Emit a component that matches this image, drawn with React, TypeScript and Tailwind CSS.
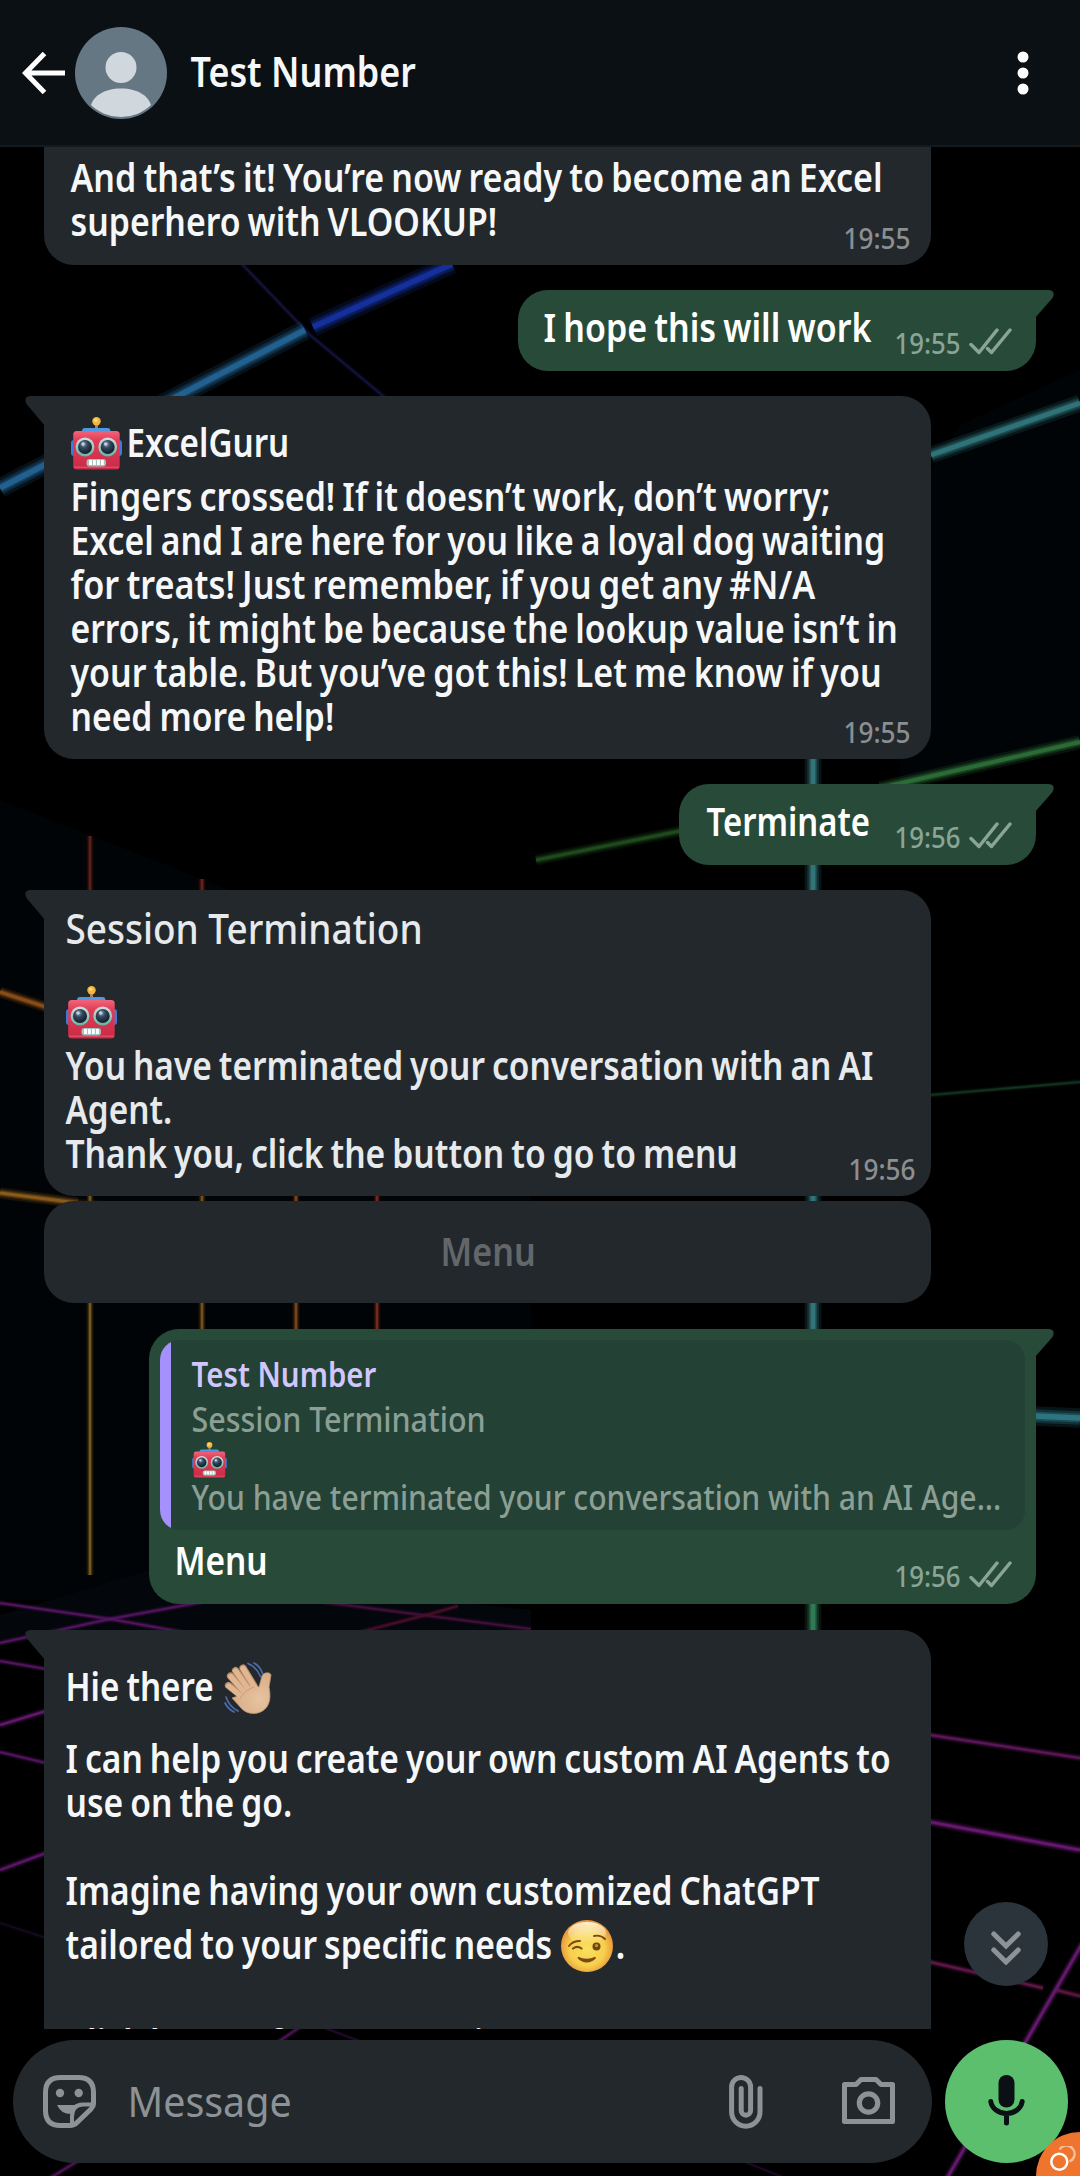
import { useLayoutEffect, useRef, type ReactNode } from "react";

/* A single text line condensed horizontally so that it fills its box. */
function Line({ className, children }: { className: string; children: ReactNode }) {
  const box = useRef<HTMLDivElement>(null);
  const text = useRef<HTMLSpanElement>(null);
  useLayoutEffect(() => {
    const fit = () => {
      if (!box.current || !text.current) return;
      const scale = (box.current.clientWidth - 3) / text.current.offsetWidth;
      text.current.style.transform = `translateX(1.5px) scaleX(${scale})`;
    };
    fit();
    document.fonts?.ready.then(fit);
  }, []);
  return (
    <div ref={box} className={`shrink-0 whitespace-nowrap ${className}`}>
      <span ref={text} className="inline-block origin-left">
        {children}
      </span>
    </div>
  );
}

function Robot({ className }: { className: string }) {
  return (
    <svg viewBox="0 0 51 53" className={`shrink-0 ${className}`} role="img" aria-label="robot">
      <defs>
        <linearGradient id="head" x1="0" y1="0" x2="0" y2="1">
          <stop offset="0" stopColor="#f0657a" />
          <stop offset=".25" stopColor="#e03e57" />
          <stop offset="1" stopColor="#c92a47" />
        </linearGradient>
        <radialGradient id="eye" cx=".4" cy=".3" r=".7">
          <stop offset="0" stopColor="#8fa3b8" />
          <stop offset=".4" stopColor="#33475d" />
          <stop offset="1" stopColor="#131c28" />
        </radialGradient>
        <linearGradient id="ring" x1="0" y1="0" x2="0" y2="1">
          <stop offset="0" stopColor="#d9dcde" />
          <stop offset="1" stopColor="#63b5a4" />
        </linearGradient>
      </defs>
      <rect x="24" y="6" width="3" height="6" fill="#a77c70" />
      <circle cx="25.5" cy="4.3" r="4.2" fill="#f3b63c" />
      <circle cx="24.8" cy="3.2" r="1.8" fill="#fbdc74" />
      <path d="M11 14.5c0-2.500 1-3.500 3-3.500h22.500c2 0 3 1 3 3.500z" fill="#4c9be0" />
      <rect x="0" y="23" width="6" height="16" rx="3" fill="#4079d8" />
      <rect x="45" y="23" width="6" height="16" rx="3" fill="#4079d8" />
      <rect x="2.200" y="14" width="46.500" height="38.500" rx="3.500" fill="url(#head)" />
      <rect x="3" y="49.500" width="45" height="1.500" fill="#e04b63" />
      <circle cx="14" cy="30" r="9.400" fill="url(#ring)" />
      <circle cx="36.700" cy="30" r="9.400" fill="url(#ring)" />
      <circle cx="14" cy="30" r="7" fill="url(#eye)" />
      <circle cx="36.700" cy="30" r="7" fill="url(#eye)" />
      <circle cx="12" cy="27" r="1.700" fill="#c4d2df" />
      <circle cx="34.700" cy="27" r="1.700" fill="#c4d2df" />
      <rect x="15.500" y="42" width="19.500" height="7.500" rx="3" fill="#a3c4bd" />
      <path d="M18 43h3v5h-3zM22 43h2.800v5H22zM26 43h2.800v5H26zM30 43h2.800v5H30z" fill="#fff" />
    </svg>
  );
}

function Hand() {
  return (
    <svg viewBox="0 0 48 52" className="h-[52px] w-[48px] shrink-0" role="img" aria-label="waving hand">
      <defs>
        <radialGradient id="skin" cx=".7" cy=".65" r=".7">
          <stop offset="0" stopColor="#e6c39f" />
          <stop offset="1" stopColor="#d8ad88" />
        </radialGradient>
      </defs>
      <g stroke="#bd8c67" strokeWidth="7.200" strokeLinecap="round">
        <path d="M18 34L4.500 23.500" />
        <path d="M20 29L6.500 14" />
        <path d="M24 25L11.500 8.500" />
        <path d="M30 24L19 6" />
      </g>
      <path d="M17 33L28 22l7 3 3-11c1-3.500 8-4.500 9-1l-2 12c2 10 1 17-4 22-6 6-17 6-23 0L8 36z" fill="url(#skin)" stroke="#c39370" strokeWidth=".8" />
      <g stroke="#dfb893" strokeWidth="5.400" strokeLinecap="round">
        <path d="M19 36L4.800 24" />
        <path d="M21 31L6.800 14.500" />
        <path d="M25 28L11.700 9" />
        <path d="M31 26L19 6.500" />
      </g>
      <path d="M16 37c3-6 8-10 14-12" stroke="#c99b76" strokeWidth="1" fill="none" />
      <g fill="none" stroke="#4b6cab" strokeWidth="1.700" strokeLinecap="round">
        <path d="M24 1.500c6 2.500 10 7 12.500 13M30 1c4 2 7 6 8.500 10.500" />
        <path d="M2 35c2 6 6 11 12 14M1 41c2 4 5 7 9 9" />
      </g>
    </svg>
  );
}

function Wink() {
  return (
    <svg viewBox="0 0 52 52" className="h-[52px] w-[52px] shrink-0" role="img" aria-label="winking face">
      <defs>
        <radialGradient id="face" cx=".5" cy=".55" r=".52">
          <stop offset="0" stopColor="#f9e05e" />
          <stop offset=".65" stopColor="#f7cf4c" />
          <stop offset="1" stopColor="#e8963a" />
        </radialGradient>
        <linearGradient id="shine" x1="0" y1="0" x2="0" y2="1">
          <stop offset="0" stopColor="#fffbe0" stopOpacity=".9" />
          <stop offset="1" stopColor="#fffbe0" stopOpacity="0" />
        </linearGradient>
      </defs>
      <circle cx="26" cy="26" r="26" fill="url(#face)" />
      <ellipse cx="26" cy="13" rx="19" ry="11" fill="url(#shine)" />
      <g fill="none" stroke="#7a4a16" strokeLinecap="round">
        <path d="M8 26c2.500-3.500 6-5 11-5" strokeWidth="1.900" />
        <path d="M33 16c4-1 8 0 11 3" strokeWidth="1.900" />
        <path d="M12 28.500c2.500-2 6-2 8.500 0" strokeWidth="2.200" />
        <path d="M17 37.500c5 5.500 12.500 5.500 17.500 0-5 3-12.500 3-17.500 0z" strokeWidth="1.800" fill="#7a4a16" />
      </g>
      <circle cx="35.500" cy="26.500" r="4" fill="#6f4515" />
      <circle cx="35.500" cy="25.500" r="1.600" fill="#c49a3c" />
    </svg>
  );
}

function Ticks() {
  return (
    <svg viewBox="0 0 43 27" className="h-[27px] w-[43px] shrink-0" fill="none" stroke="#8aa497" strokeWidth="3.500" strokeLinecap="round" strokeLinejoin="round">
      <path d="M2 16.500L10 24.500 28 2" />
      <path d="M18.500 20.500L22.500 24.500 41 2" />
    </svg>
  );
}

function Time({ children }: { children: string }) {
  return <Line className="h-[40px] w-[70px] text-[28.5px] leading-[40px] font-medium text-[#8b8f92]">{children}</Line>;
}

function SentMeta({ children }: { children: string }) {
  return (
    <div className="flex items-center gap-[7px]">
      <Line className="h-[40px] w-[69px] text-[28.5px] leading-[40px] font-medium text-[#8aa497]">{children}</Line>
      <div className="pb-[3px]">
        <Ticks />
      </div>
    </div>
  );
}

function TailLeft() {
  return (
    <svg viewBox="0 0 20 30" className="absolute top-0 -left-[19px] h-[30px] w-[20px]" fill="#23282c">
      <path d="M20 0H5Q-2 1 1.500 8L20 30z" />
    </svg>
  );
}

function TailRight() {
  return (
    <svg viewBox="0 0 20 30" className="absolute top-0 -right-[18px] h-[30px] w-[20px]" fill="#274b38">
      <path d="M0 0H15Q22 1 18.500 8L1 28z" />
    </svg>
  );
}

type Beam = [string, string, number];

const beams: Beam[] = [
  ["M240 262L310 335 388 400", "#14143f", 2],
  ["M305 330L178 396 0 488", "#22618f", 7],
  ["M452 264L313 327", "#15309a", 7],
  ["M931 455L1080 403", "#2f7378", 6],
  ["M813 755V1600", "#327378", 6],
  ["M813 1600V1632", "#2f7a54", 6],
  ["M536 860L690 829", "#1e4a1c", 4],
  ["M880 788L1080 742", "#2b6b36", 5],
  ["M931 1095L1080 1082", "#12331f", 2],
  ["M1034 1416L1080 1418", "#2c7580", 7],
  ["M90 836V892", "#5e1f18", 2.5],
  ["M202 879V892", "#6e1f18", 2.5],
  ["M90 1190V1575", "#75561c", 2.5],
  ["M202 1190V1332", "#75501a", 2.5],
  ["M296 1190V1332", "#7a431a", 2.5],
  ["M377 1190V1332", "#76291a", 2.5],
  ["M0 992L46 1007", "#8a4c17", 4],
  ["M0 1193L78 1203", "#8a5a1c", 4],
  ["M78 1203L140 1208", "#4f3513", 3],
  ["M0 1603L110 1619 182 1632", "#541560", 2.2],
  ["M0 1643L110 1619 202 1602", "#541560", 2.2],
  ["M322 1602L531 1629", "#40103a", 2.2],
  ["M360 1632L430 1614 458 1606", "#480e2a", 2.2],
  ["M0 1661L46 1669", "#541560", 2.2],
  ["M0 1725L46 1711", "#64186d", 2.6],
  ["M0 1752L46 1763", "#541560", 2.2],
  ["M0 1870L46 1853", "#5a1666", 2.6],
  ["M0 1923L46 1938", "#150a1c", 2],
  ["M930 1735L1080 1758", "#5d165a", 2.6],
  ["M930 1822L1080 1850", "#66186d", 3.2],
  ["M930 1962L1043 1988", "#5f1649", 2.6],
  ["M1056 1990L1080 1996", "#5a1641", 2.6],
  ["M1082 1944L946 2180", "#641a6c", 3],
  ["M278 2042L300 2027", "#4a1350", 2.2],
  ["M322 2027L362 2042", "#270a30", 1.5],
  ["M50 2178L78 2161", "#4c1555", 2.2],
  ["M745 2162L785 2178", "#200a28", 1.5],
];

function Wallpaper() {
  return (
    <svg viewBox="0 0 1080 2176" className="absolute inset-0 h-[2176px] w-[1080px]" fill="none">
      <path d="M1080 370L960 425 900 520V780L1080 740z" fill="#010407" />
      <path d="M0 800L230 890 531 890V1600H0z" fill="#010406" />
      <path d="M0 1615L150 1570 531 1610V1640H0z" fill="#03060a" />
      {beams.map(([d, color, width]) => (
        <g key={d} stroke={color}>
          <path d={d} strokeWidth={width * 2.8} opacity=".18" />
          <path d={d} strokeWidth={width * 1.9} opacity=".3" />
          <path d={d} strokeWidth={width * 1.3} opacity=".4" />
          <path d={d} strokeWidth={width * 0.8} />
        </g>
      ))}
    </svg>
  );
}

const body = "text-[39.5px] leading-[44px] h-[44px] font-semibold [word-spacing:-0.05em]";

export default function App() {
  return (
    <div className="relative flex h-[2176px] w-[1080px] flex-col overflow-hidden bg-black [font-family:'Noto_Sans',sans-serif]">
      <Wallpaper />

      <header className="relative flex h-[147px] shrink-0 items-center border-b-2 border-[#14191d] bg-[#0a1014] pl-[22px]">
        <svg viewBox="0 0 43 42" className="h-[42px] w-[43px]" fill="none" stroke="#fff" strokeWidth="5">
          <path d="M22.500 1.500L3.500 21 22.500 40.500M3 21H43" />
        </svg>
        <svg viewBox="0 0 92 92" className="ml-[10px] h-[92px] w-[92px]">
          <clipPath id="avatar">
            <circle cx="46" cy="46" r="44" />
          </clipPath>
          <circle cx="46" cy="46" r="46" fill="#667784" />
          <circle cx="46" cy="40.500" r="15.500" fill="#d0d8de" />
          <path d="M15 82c2-13 14-20.500 31-20.500S75 69 77 82v12H15z" fill="#d0d8de" clipPath="url(#avatar)" />
        </svg>
        <Line className="mb-[4px] ml-[22px] h-[50px] w-[228px] text-[41px] leading-[50px] font-semibold text-[#f5f7f8]">Test Number</Line>
        <svg viewBox="0 0 12 44" className="mr-[51px] ml-auto h-[44px] w-[12px]" fill="#fff">
          <circle cx="6" cy="6" r="5.500" />
          <circle cx="6" cy="22" r="5.500" />
          <circle cx="6" cy="38" r="5.500" />
        </svg>
      </header>

      <main className="relative flex h-[1882px] shrink-0 flex-col overflow-hidden px-[44px] text-[#f5f7f9]">
        <section className="flex h-[118px] w-[887px] shrink-0 justify-between rounded-b-[30px] bg-[#23282c] pt-[8px] pl-[25px]">
          <div>
            <Line className={`${body} w-[815px]`}>And that’s it! You’re now ready to become an Excel</Line>
            <Line className={`${body} w-[430px]`}>superhero with VLOOKUP!</Line>
          </div>
          <div className="-ml-[60px] self-end pr-[19px] pb-[7px]">
            <Time>19:55</Time>
          </div>
        </section>

        <section className="relative mt-[25px] flex h-[81px] w-[518px] shrink-0 justify-between self-end rounded-[30px] rounded-tr-none bg-[#274b38] pt-[15px] pr-[24px] pl-[24px]">
          <TailRight />
          <Line className={`${body} w-[331px] text-white`}>I hope this will work</Line>
          <div className="pt-[18px]">
            <SentMeta>19:55</SentMeta>
          </div>
        </section>

        <section className="relative mt-[25px] h-[363px] w-[887px] shrink-0 rounded-[30px] rounded-tl-none bg-[#23282c] pt-[19px] pl-[25px]">
          <TailLeft />
          <div className="flex h-[59px] items-center">
            <Robot className="mb-[3px] ml-[2px] h-[53px] w-[51px]" />
            <Line className={`${body} mb-[5px] ml-[3px] w-[166px]`}>ExcelGuru</Line>
          </div>
          <Line className={`${body} w-[763px]`}>Fingers crossed! If it doesn’t work, don’t worry;</Line>
          <Line className={`${body} w-[818px]`}>Excel and I are here for you like a loyal dog waiting</Line>
          <Line className={`${body} w-[748px]`}>for treats! Just remember, if you get any #N/A</Line>
          <Line className={`${body} w-[830px]`}>errors, it might be because the lookup value isn’t in</Line>
          <Line className={`${body} w-[814px]`}>your table. But you’ve got this! Let me know if you</Line>
          <div className="flex justify-between pr-[19px]">
            <Line className={`${body} w-[267px]`}>need more help!</Line>
            <div className="pt-[18px]">
              <Time>19:55</Time>
            </div>
          </div>
        </section>

        <section className="relative mt-[25px] flex h-[81px] w-[357px] shrink-0 justify-between self-end rounded-[30px] rounded-tr-none bg-[#274b38] pt-[15px] pr-[24px] pl-[26px]">
          <TailRight />
          <Line className={`${body} w-[167px] text-white`}>Terminate</Line>
          <div className="pt-[18px]">
            <SentMeta>19:56</SentMeta>
          </div>
        </section>

        <section className="relative mt-[25px] h-[306px] w-[887px] shrink-0 rounded-[30px] rounded-tl-none bg-[#23282c] pt-[16px] pl-[20px] text-[#e6eaec]">
          <TailLeft />
          <Line className="h-[44px] w-[360px] text-[41px] leading-[44px] font-medium">Session Termination</Line>
          <Robot className="mt-[36px] mb-[4px] ml-[2px] h-[53px] w-[51px]" />
          <Line className={`${body} w-[811px]`}>You have terminated your conversation with an AI</Line>
          <Line className={`${body} w-[110px]`}>Agent.</Line>
          <div className="flex justify-between pr-[14px]">
            <Line className={`${body} w-[675px]`}>Thank you, click the button to go to menu</Line>
            <div className="pt-[18px]">
              <Time>19:56</Time>
            </div>
          </div>
        </section>

        <button className="mt-[5px] flex h-[102px] w-[887px] shrink-0 items-center justify-center rounded-[30px] bg-[#23282c] pb-[2px] text-[#63676a]">
          <Line className={`${body} w-[98px]`}>Menu</Line>
        </button>

        <section className="relative mt-[26px] flex h-[275px] w-[887px] shrink-0 flex-col self-end rounded-[30px] rounded-tr-none bg-[#274b38] px-[11px] pt-[11px]">
          <TailRight />
          <div className="flex h-[190px] overflow-hidden rounded-[20px] bg-[#234135]">
            <div className="w-[11px] shrink-0 bg-[#a491fb]" />
            <div className="pt-[12px] pl-[19px] text-[35px] leading-[44px] font-medium text-[#8b9f95]">
              <Line className="h-[45px] w-[188px] font-semibold text-[#d2c6ff]">Test Number</Line>
              <Line className="h-[45px] w-[297px]">Session Termination</Line>
              <Robot className="ml-[2px] h-[36px] w-[35px]" />
              <Line className="-mt-[3px] h-[44px] w-[813px]">You have terminated your conversation with an AI Age...</Line>
            </div>
          </div>
          <div className="flex justify-between pr-[13px] pl-[13px]">
            <Line className={`${body} mt-[8px] w-[96px] text-white`}>Menu</Line>
            <div className="pt-[26px]">
              <SentMeta>19:56</SentMeta>
            </div>
          </div>
        </section>

        <section className="relative mt-[26px] h-[460px] w-[887px] shrink-0 rounded-[30px] rounded-tl-none bg-[#23282c] pt-[32px] pl-[20px]">
          <TailLeft />
          <div className="flex h-[52px]">
            <Line className={`${body} mt-[2px] w-[151px]`}>Hie there</Line>
            <div className="ml-[9px]">
              <Hand />
            </div>
          </div>
          <Line className={`${body} mt-[22px] w-[828px]`}>I can help you create your own custom AI Agents to</Line>
          <Line className={`${body} w-[230px]`}>use on the go.</Line>
          <Line className={`${body} mt-[44px] w-[757px]`}>Imagine having your own customized ChatGPT</Line>
          <div className="mt-[8px] flex h-[54px]">
            <Line className={`${body} mt-[2px] w-[490px]`}>tailored to your specific needs</Line>
            <div className="ml-[7px]">
              <Wink />
            </div>
            <Line className={`${body} mt-[2px] ml-[1px] w-[13px]`}>.</Line>
          </div>
          <Line className={`${body} mt-[47px] w-[480px]`}>Click button for more options</Line>
        </section>
      </main>

      <footer className="relative flex flex-1 items-start gap-[13px] pt-[11px] pl-[13px]">
        <div className="flex h-[123px] w-[919px] items-center rounded-full bg-[#23282c] pl-[30px]">
          <svg viewBox="0 0 53 53" className="h-[53px] w-[53px]" fill="none" stroke="#8c9296" strokeWidth="5">
            <path d="M50.500 29V17.500Q50.500 2.500 35.500 2.500H17.500Q2.500 2.500 2.500 17.500V35.500Q2.500 50.500 17.500 50.500H27Q31 50.500 34 47.500L48 34Q50.500 31.500 50.500 29z" />
            <path d="M29 50V42Q29 29.500 40 29.500H50" strokeWidth="4" />
            <path d="M14 30H32L28 39Q18 39 14 30z" fill="#8c9296" stroke="none" />
            <circle cx="17" cy="18" r="4.200" fill="#8c9296" stroke="none" />
            <circle cx="35.700" cy="18" r="4.200" fill="#8c9296" stroke="none" />
          </svg>
          <Line className="mb-[2px] ml-[30px] h-[50px] w-[167px] text-[42px] leading-[50px] text-[#8c9296]">Message</Line>
          <svg viewBox="0 0 34 54" className="mr-[79px] ml-auto h-[54px] w-[34px]" fill="none" stroke="#8c9296" strokeWidth="5" strokeLinecap="round">
            <path d="M31 13.500V37A14.200 14.200 0 0 1 2.600 37V12A9.500 9.500 0 0 1 21.600 12V35.500A4.700 4.700 0 0 1 12.200 35.500V13.500" />
          </svg>
          <svg viewBox="0 0 53 48" className="mb-[1px] mr-[37px] h-[48px] w-[53px]" fill="none" stroke="#8c9296" strokeWidth="5" strokeLinejoin="round">
            <path d="M2.500 7.500H14L19 2.500H34L39 7.500H50.500V44.500H2.500z" />
            <circle cx="26.500" cy="26" r="9.200" strokeWidth="5.200" />
          </svg>
        </div>
        <button className="flex h-[123px] w-[123px] items-center justify-center rounded-full bg-[#5bbf6e]">
          <svg viewBox="0 0 37 51" className="mb-[2px] h-[51px] w-[37px]" fill="none" stroke="#0a1014" strokeWidth="5" strokeLinecap="round">
            <rect x="10.500" y="0" width="16" height="32.500" rx="8" fill="#0a1014" stroke="none" />
            <path d="M2.800 26.500A15.800 13.500 0 0 0 34.200 26.500M18.500 41V48" />
          </svg>
        </button>
      </footer>

      <button className="absolute top-[1902px] left-[964px] flex h-[84px] w-[84px] items-center justify-center rounded-full bg-[#2b343a]">
        <svg viewBox="0 0 30 34" className="mt-[8px] h-[34px] w-[30px]" fill="none" stroke="#8d9499" strokeWidth="5" strokeLinecap="round">
          <path d="M2.800 3L15 15 27.200 3M2.800 19L15 31 27.200 19" />
        </svg>
      </button>

      <div className="absolute top-[2132px] left-[1036px] h-[88px] w-[88px] rounded-full bg-[#ef752f]">
        <svg viewBox="0 0 26 26" className="mt-[14px] ml-[14px] h-[26px] w-[26px]" fill="none">
          <path d="M9.500 3.500A8.200 8.200 0 1 1 19.500 15.500" stroke="#f8c09a" strokeWidth="2.300" />
          <circle cx="9.300" cy="15.800" r="8" stroke="#fff" strokeWidth="2.500" />
        </svg>
      </div>
    </div>
  );
}
